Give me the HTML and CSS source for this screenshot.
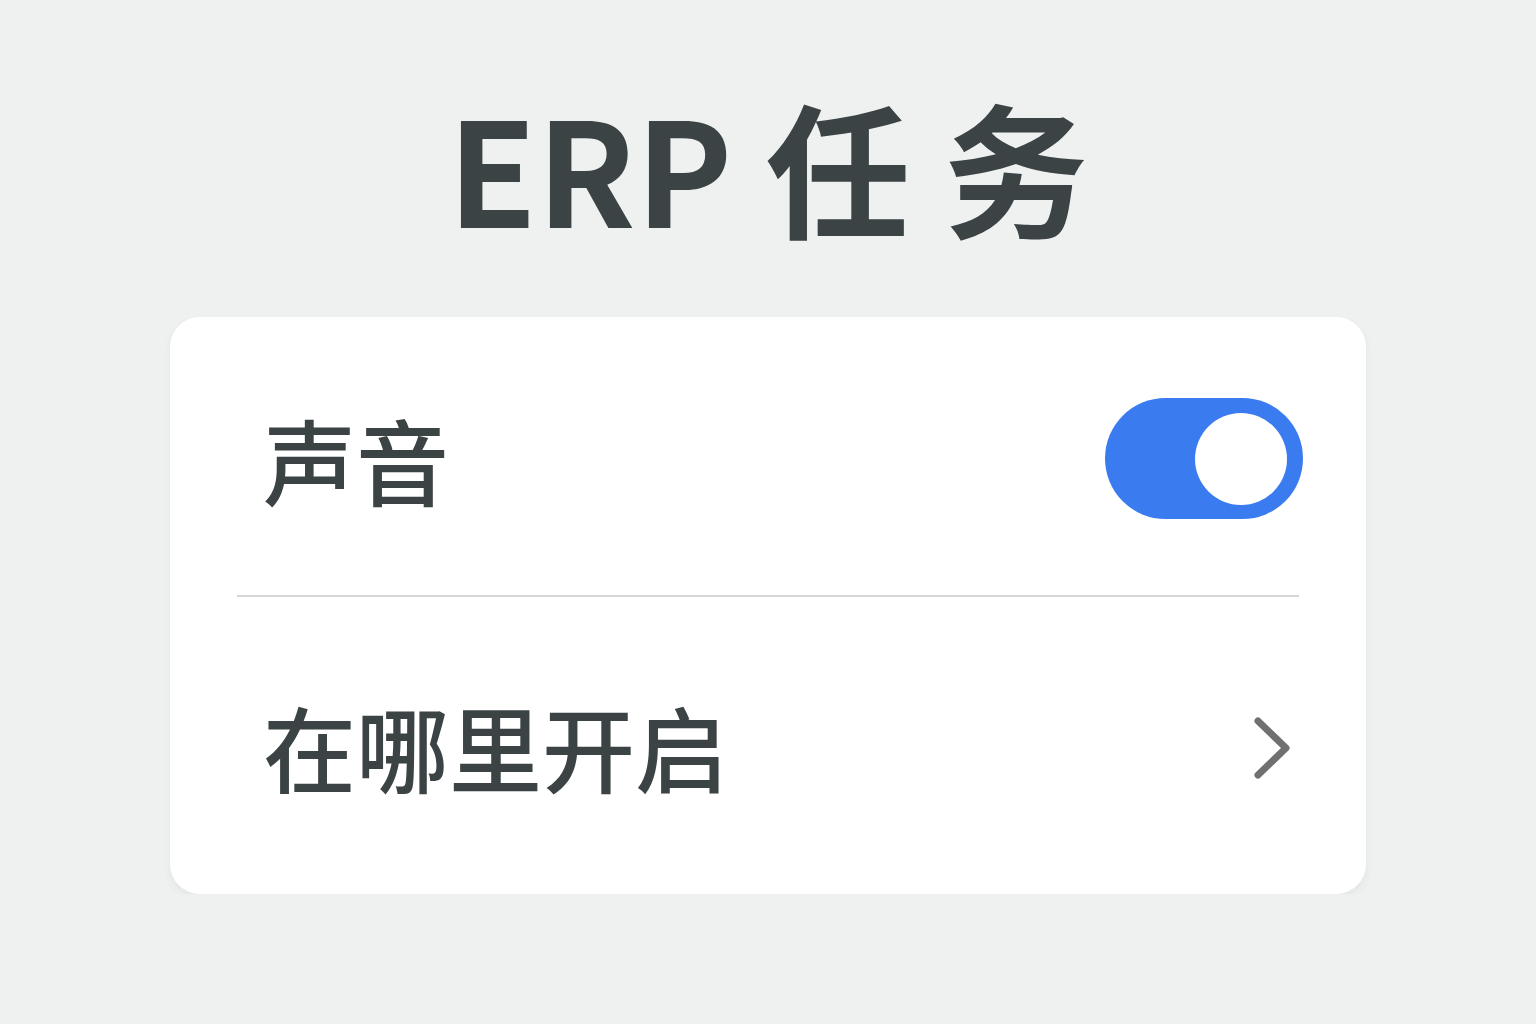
FILE: index.html
```html
<!DOCTYPE html>
<html lang="zh-CN">
<head>
    <meta charset="UTF-8">
    <meta name="viewport" content="width=device-width, initial-scale=1.0">
    <title>ERP 任务</title>
    <link rel="stylesheet" href="styles.css">
</head>
<body>
    <h1 class="title">ERP 任 务</h1>

    <div class="card">
        <div class="row row-top">
            <span class="label">声音</span>
            <div class="toggle"><div class="knob"></div></div>
        </div>
        <div class="divider"></div>
        <div class="row row-bottom">
            <span class="label">在哪里开启</span>
            <svg class="chevron" width="40" height="70" viewBox="0 0 40 70">
                <path d="M6 8 L34 35 L6 62" fill="none" stroke="#707070" stroke-width="7" stroke-linecap="round" stroke-linejoin="round"/>
            </svg>
        </div>
    </div>
</body>
</html>
```

FILE: styles.css
```css
body {
    margin: 0;
    background: #eff1f1;
    font-family: "Noto Sans CJK SC", "Noto Sans", sans-serif;
    color: #3c4345;
}
.title {
    margin: 93px 0 0;
    font-size: 145px;
    line-height: 1;
    font-weight: 700;
    text-align: center;
}
.card {
    width: 1196px;
    margin: 79px auto 0;
    background: #fff;
    border-radius: 30px;
    box-shadow: 0 4px 10px rgba(0, 0, 0, 0.05);
}
.row {
    display: flex;
    align-items: center;
    justify-content: space-between;
    box-sizing: border-box;
    padding: 0 63px 0 93px;
}
.row-top {
    height: 278px;
    padding-top: 5px;
}
.row-bottom {
    height: 297px;
    padding-top: 0;
}
.label {
    font-size: 93px;
    font-weight: 500;
    line-height: 1;
}
.divider {
    height: 2px;
    margin: 0 67px;
    background: #d4d6d7;
}
.toggle {
    width: 198px;
    height: 121px;
    box-sizing: border-box;
    padding: 14px 16px;
    border-radius: 61px;
    background: #3b7bf0;
    display: flex;
    justify-content: flex-end;
    align-items: center;
}
.knob {
    width: 92px;
    height: 92px;
    border-radius: 50%;
    background: #fff;
}
.chevron {
    margin: 4px 11px 0 0;
}
```
